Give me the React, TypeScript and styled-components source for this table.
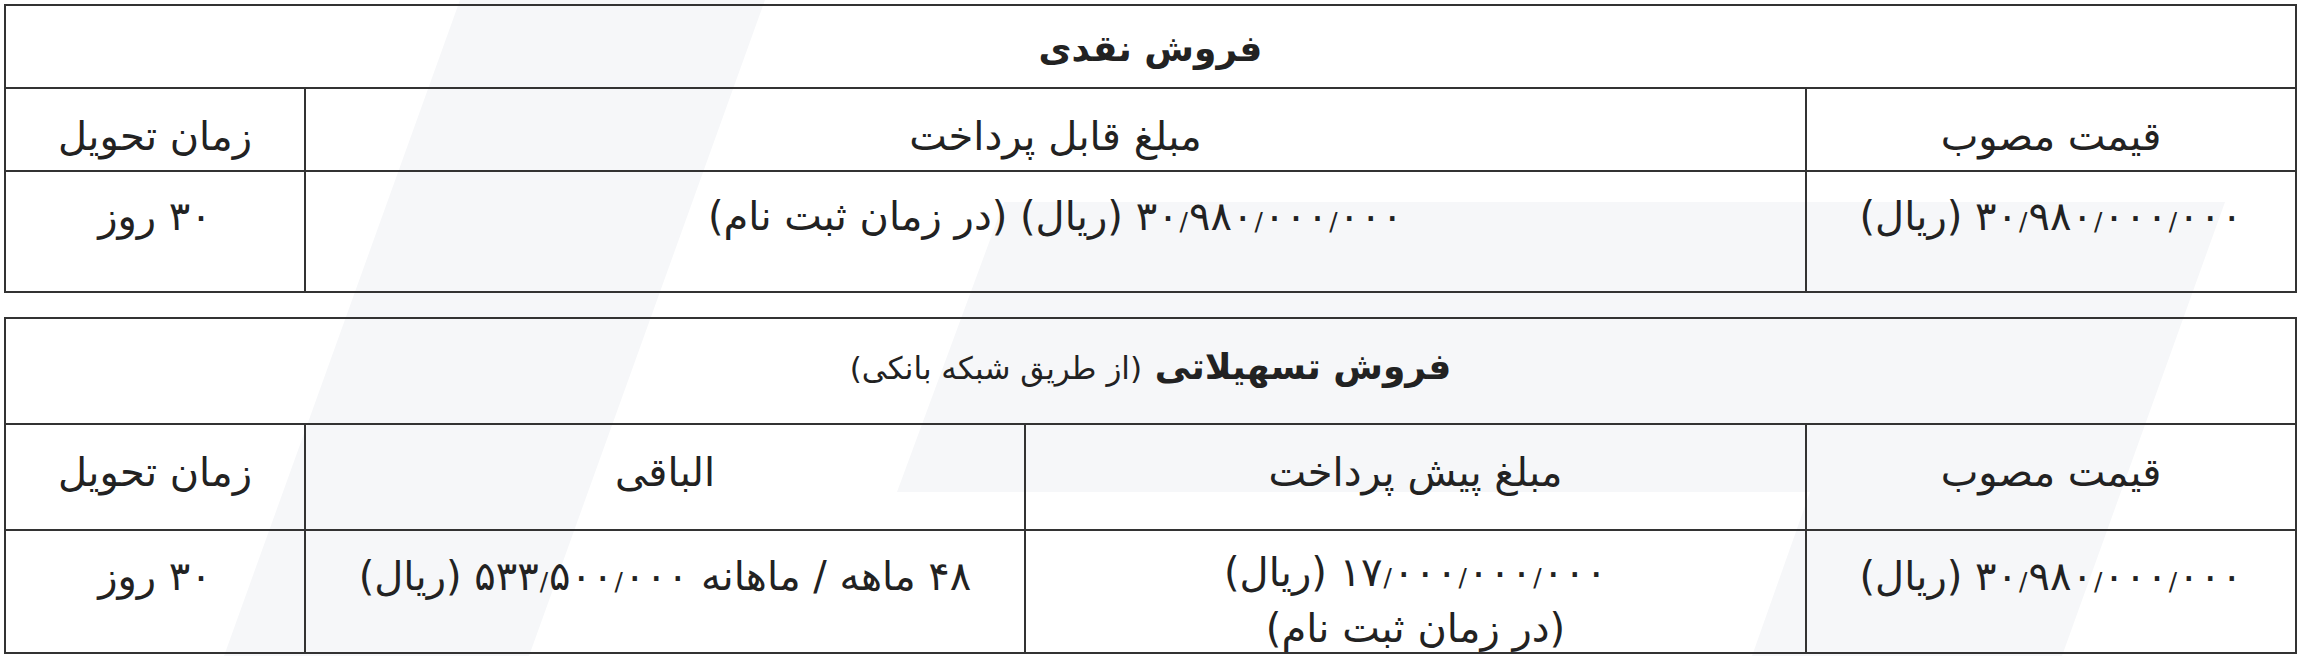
import styled, { createGlobalStyle } from "styled-components"

const GlobalStyle = createGlobalStyle`
    html, body {
        margin: 0;
        padding: 0;
        background: #ffffff;
    }
    body {
        font-family: "DejaVu Sans", sans-serif;
        color: #222222;
    }
`

const LINE = "2px solid #333333"

const Page = styled.div`
    position: relative;
    width: 2300px;
    height: 656px;
    box-sizing: border-box;
    padding: 4px 3px 0 4px;
    direction: rtl;
    overflow: hidden;
`

const Watermark = styled.svg`
    position: absolute;
    top: 0;
    left: 0;
    width: 2300px;
    height: 656px;
    z-index: 0;
`

const Table = styled.div<{ $cols: string }>`
    position: relative;
    z-index: 1;
    display: grid;
    grid-template-columns: ${(p) => p.$cols};
    border: ${LINE};

    & + & {
        margin-top: 24px;
    }
`

const Cell = styled.div<{ $h: number; $pt: number; $edge?: boolean; $ruled?: boolean }>`
    box-sizing: border-box;
    height: ${(p) => p.$h}px;
    padding-top: ${(p) => p.$pt}px;
    border-left: ${(p) => (p.$edge ? "none" : LINE)};
    border-bottom: ${(p) => (p.$ruled ? LINE : "none")};
    text-align: center;
    font-size: 40px;
    line-height: 50px;
    white-space: nowrap;
`

const TitleCell = styled(Cell)`
    grid-column: 1 / -1;
    border-left: none;
    border-bottom: ${LINE};
`

const Strong = styled.span`
    font-weight: bold;
    font-size: 36px;
`

const Note = styled.span`
    font-size: 31px;
`

// thousands separator drawn as a short slash, like the site font does
const Sep = styled.span`
    font-size: 0.62em;
    margin: 0 1px;
`

const Amount = ({ value }: { value: string }) => {
    const groups = value.split("/")
    return (
        <>
            {groups.map((g, i) => (
                <span key={i}>
                    {i > 0 && <Sep>/</Sep>}
                    {g}
                </span>
            ))}
        </>
    )
}

const cashHead = ["قیمت مصوب", "مبلغ قابل پرداخت", "زمان تحویل"]
const loanHead = ["قیمت مصوب", "مبلغ پیش پرداخت", "الباقی", "زمان تحویل"]

const PRICE = "۳۰/۹۸۰/۰۰۰/۰۰۰"

const App = () => {
    return (
        <>
            <GlobalStyle />
            <Page>
                <Watermark viewBox="0 0 2300 656">
                    <polygon points="460,0 765,0 529,656 224,656" fill="#f6f7f9" />
                    <polygon points="1004,202 2225,202 2062,656 1752,656 1810,492 897,492" fill="#f6f7f9" />
                </Watermark>

                <Table $cols="490px 1fr 298px">
                    <TitleCell $h={83} $pt={16}>
                        <Strong>فروش نقدی</Strong>
                    </TitleCell>
                    {cashHead.map((t, i) => (
                        <Cell key={t} $h={83} $pt={22} $ruled $edge={i === cashHead.length - 1}>
                            {t}
                        </Cell>
                    ))}
                    <Cell $h={119} $pt={19}>
                        <Amount value={PRICE} /> (ریال)
                    </Cell>
                    <Cell $h={119} $pt={19}>
                        <Amount value={PRICE} /> (ریال) (در زمان ثبت نام)
                    </Cell>
                    <Cell $h={119} $pt={19} $edge>
                        ۳۰ روز
                    </Cell>
                </Table>

                <Table $cols="490px 781px 1fr 298px">
                    <TitleCell $h={106} $pt={21}>
                        <Strong>فروش تسهیلاتی</Strong> <Note>(از طریق شبکه بانکی)</Note>
                    </TitleCell>
                    {loanHead.map((t, i) => (
                        <Cell key={t} $h={106} $pt={22} $ruled $edge={i === loanHead.length - 1}>
                            {t}
                        </Cell>
                    ))}
                    <Cell $h={121} $pt={20}>
                        <Amount value={PRICE} /> (ریال)
                    </Cell>
                    <Cell $h={121} $pt={16}>
                        <Amount value="۱۷/۰۰۰/۰۰۰/۰۰۰" /> (ریال)
                        <br />
                        (در زمان ثبت نام)
                    </Cell>
                    <Cell $h={121} $pt={20}>
                        ۴۸ ماهه / ماهانه <Amount value="۵۳۳/۵۰۰/۰۰۰" /> (ریال)
                    </Cell>
                    <Cell $h={121} $pt={20} $edge>
                        ۳۰ روز
                    </Cell>
                </Table>
            </Page>
        </>
    )
}

export default App
